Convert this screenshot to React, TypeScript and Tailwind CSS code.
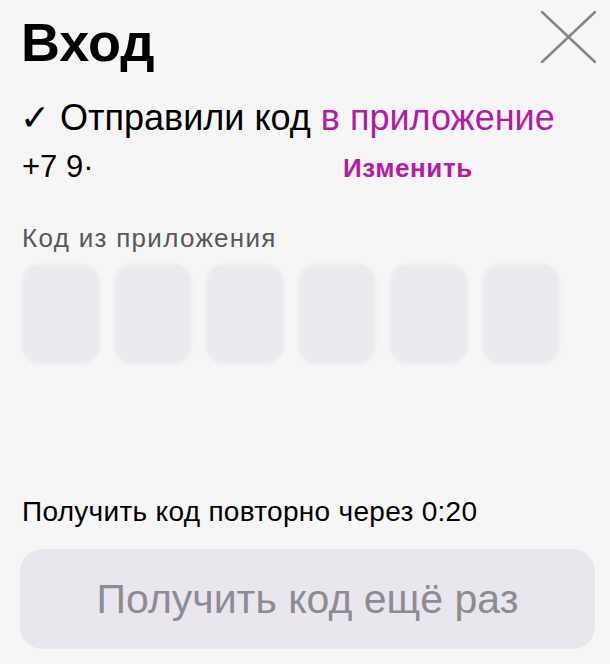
import React from 'react';

const purple = 'text-[#b51aa3]';

const CodeCells: React.FC<{ count: number }> = ({ count }) => (
  <div className="flex gap-[14px] mt-[10px]">
    {Array.from({ length: count }).map((_, i) => (
      <div key={i} className="w-[78px] h-[100px] rounded-[18px] bg-[#ebeaef] blur-[1.5px]" />
    ))}
  </div>
);

const App: React.FC = () => {
  return (
    <div className="w-[610px] h-[664px] bg-[#f7f6f7] text-black font-['Liberation_Sans',Arial,sans-serif] overflow-hidden">
      <div className="flex items-start justify-between pl-[21px] pr-[13px] pt-[10px]">
        <h1 className="mt-[2px] text-[54px] font-bold leading-[61px]">Вход</h1>
        <button className="w-[57px] h-[54px] text-[#85848b]">
          <svg viewBox="0 0 57 54" className="w-full h-full" fill="none" stroke="currentColor" strokeWidth="2.5" strokeLinecap="round">
            <path d="M2 2 L55 52 M55 2 L2 52" />
          </svg>
        </button>
      </div>

      <div className="px-[22px]">
        <p className="mt-[25px] -ml-[2px] text-[36px] leading-[40px] whitespace-nowrap">
          ✓ Отправили код <span className={purple}>в приложение</span>
        </p>
        <div className="flex items-baseline mt-[10px] h-[38px]">
          <span className="text-[31px] leading-[38px] w-[321px]">+7 9·</span>
          <button className={`${purple} text-[26px] font-bold tracking-[0.6px]`}>Изменить</button>
        </div>

        <p className="mt-[36px] text-[26px] leading-[32px] tracking-[1.3px] text-[#58575e]">Код из приложения</p>
        <CodeCells count={6} />

        <p className="mt-[131px] text-[28px] leading-[34px] tracking-[0.3px]">Получить код повторно через 0:20</p>

        <button className="mt-[20px] -ml-[2px] w-[575px] h-[100px] rounded-[22px] bg-[#e9e7ed] text-[#8d8b93] text-[41px] leading-[44px]">
          Получить код ещё раз
        </button>
      </div>
    </div>
  );
};

export default App;
